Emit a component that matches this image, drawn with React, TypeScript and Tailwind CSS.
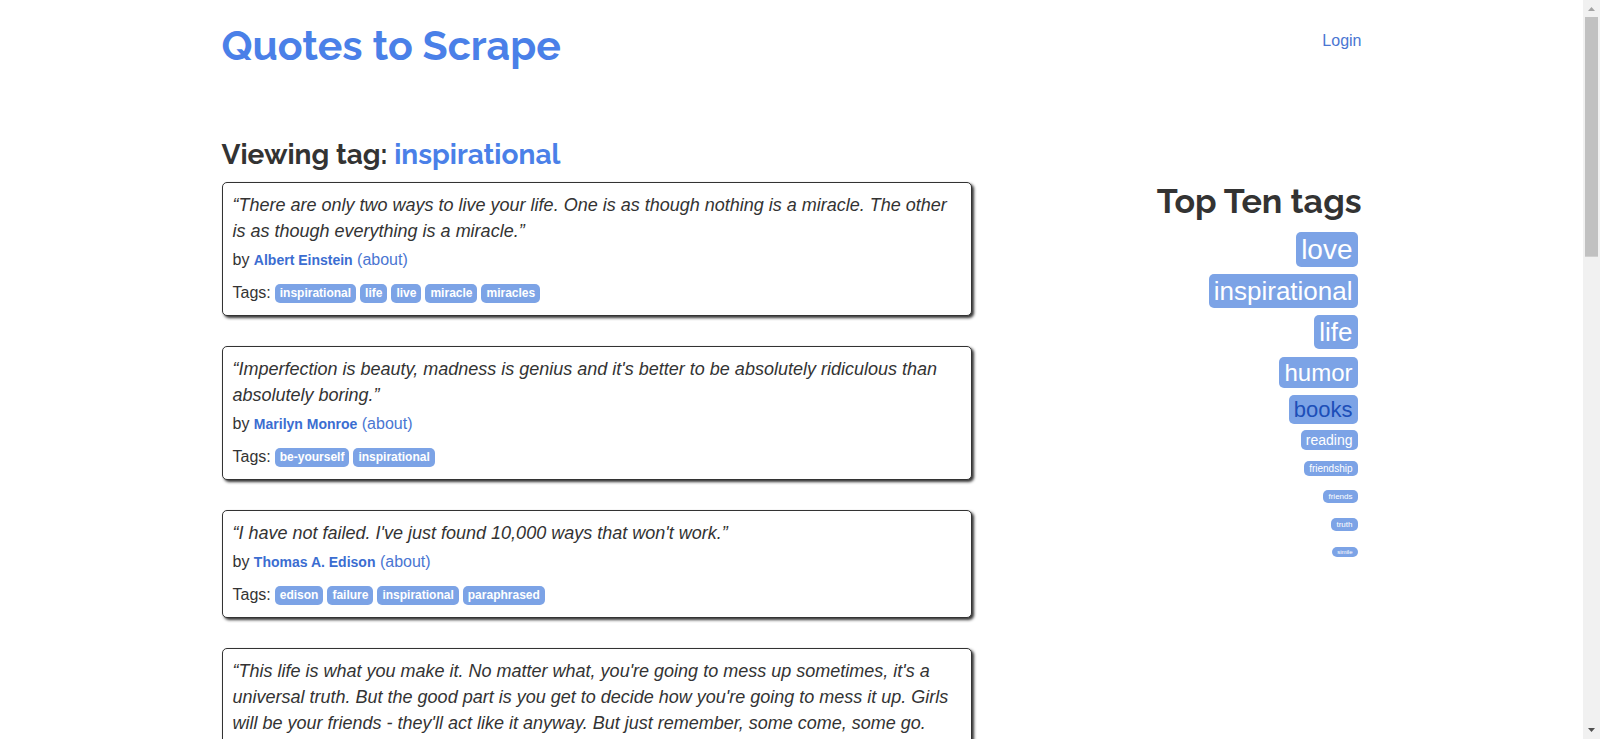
const HEADING = "font-['Raleway','Lato',sans-serif] font-bold";

type Quote = { text: string; author: string; tags: string[] };

const quotes: Quote[] = [
  {
    text: "“There are only two ways to live your life. One is as though nothing is a miracle. The other is as though everything is a miracle.”",
    author: "Albert Einstein",
    tags: ["inspirational", "life", "live", "miracle", "miracles"],
  },
  {
    text: "“Imperfection is beauty, madness is genius and it's better to be absolutely ridiculous than absolutely boring.”",
    author: "Marilyn Monroe",
    tags: ["be-yourself", "inspirational"],
  },
  {
    text: "“I have not failed. I've just found 10,000 ways that won't work.”",
    author: "Thomas A. Edison",
    tags: ["edison", "failure", "inspirational", "paraphrased"],
  },
  {
    text: "“This life is what you make it. No matter what, you're going to mess up sometimes, it's a universal truth. But the good part is you get to decide how you're going to mess it up. Girls will be your friends - they'll act like it anyway. But just remember, some come, some go.",
    author: "Marilyn Monroe",
    tags: ["friends", "inspirational", "life"],
  },
];

const topTags = [
  { name: "love", row: "h-[42px]", size: "text-[28px] leading-[35px] text-white" },
  { name: "inspirational", row: "h-[42px]", size: "text-[26px] leading-[34px] text-white" },
  { name: "life", row: "h-10", size: "text-[26px] leading-[34px] text-white" },
  { name: "humor", row: "h-10", size: "text-[24px] leading-[31px] text-white" },
  { name: "books", row: "h-[34px]", size: "text-[22px] leading-[29px] text-[#1d4fb8]" },
  { name: "reading", row: "h-7", size: "text-[14px] leading-[20px] text-white" },
  { name: "friendship", row: "h-7", size: "text-[10px] leading-[15px] text-white" },
  { name: "friends", row: "h-7", size: "text-[8px] leading-[13px] text-white" },
  { name: "truth", row: "h-7", size: "text-[8px] leading-[13px] text-white" },
  { name: "simile", row: "h-7", size: "text-[6px] leading-[10px] text-white" },
];

function QuoteCard({ quote }: { quote: Quote }) {
  return (
    <article className="mb-[30px] rounded-[5px] border border-[#333] bg-white px-[10px] pt-[9px] pb-[10px] shadow-[2px_2px_3px_#333]">
      <p className="text-[18px] leading-[26px] italic">{quote.text}</p>
      <p className="mt-[5px] text-base leading-[22px]">
        by <span className="text-[14px] font-bold text-[#3b6dd1]">{quote.author}</span>{" "}
        <a href="#about" className="text-[#4a76d2]">(about)</a>
      </p>
      <div className="mt-[10px] flex h-6 items-center gap-1 text-base">
        Tags:
        {quote.tags.map((tag) => (
          <a
            key={tag}
            href={"#" + tag}
            className="mt-px rounded-[5px] bg-[#7ca3e6] px-[5px] text-[12px] leading-[19px] font-bold text-white"
          >
            {tag}
          </a>
        ))}
      </div>
    </article>
  );
}

function ScrollTrack() {
  return (
    <div aria-hidden="true" className="flex w-[17px] shrink-0 flex-col items-center bg-[#f1f1f1]">
      <svg className="h-[17px] w-[17px] shrink-0" viewBox="0 0 17 17">
        <path d="M5 11h7L8.500 7z" fill="#a3a3a3" />
      </svg>
      <div className="w-[13px] grow bg-[linear-gradient(#c1c1c1,#c1c1c1)] bg-[length:100%_34%] bg-no-repeat" />
      <svg className="h-[17px] w-[17px] shrink-0" viewBox="0 0 17 17">
        <path d="M5 6h7l-3.500 4z" fill="#505050" />
      </svg>
    </div>
  );
}

export default function App() {
  return (
    <div className="flex h-screen overflow-hidden bg-white font-['Liberation_Sans',Arial,sans-serif] text-[#333]">
      <div className="min-w-0 flex-1 overflow-hidden">
        <div className="mx-auto max-w-[1170px] px-[15px]">
          <header className="flex items-start justify-between pt-[21px]">
            <h1 className={HEADING + " text-[41px] leading-[50px]"}>
              <a href="#home" className="text-[#4a80e8]">Quotes to Scrape</a>
            </h1>
            <a href="#login" className="mt-2 text-base leading-6 text-[#4a76d2]">Login</a>
          </header>
          <h2 className={HEADING + " mt-16 text-[28px] leading-10"}>
            Viewing tag: <a href="#inspirational" className="text-[#4a80e8]">inspirational</a>
          </h2>
          <div className="mt-[7px] flex items-start justify-between gap-8">
            <main className="w-[750px]">
              {quotes.map((quote) => (
                <QuoteCard key={quote.text} quote={quote} />
              ))}
            </main>
            <aside className="flex flex-col items-end">
              <h2 className={HEADING + " mb-2 text-[34px] leading-[38px]"}>Top Ten tags</h2>
              {topTags.map((tag) => (
                <div key={tag.name} className={"mr-1 flex items-center " + tag.row}>
                  <a href={"#" + tag.name} className={"rounded-[5px] bg-[#7ca3e6] px-[5px] " + tag.size}>
                    {tag.name}
                  </a>
                </div>
              ))}
            </aside>
          </div>
        </div>
      </div>
      <ScrollTrack />
    </div>
  );
}
